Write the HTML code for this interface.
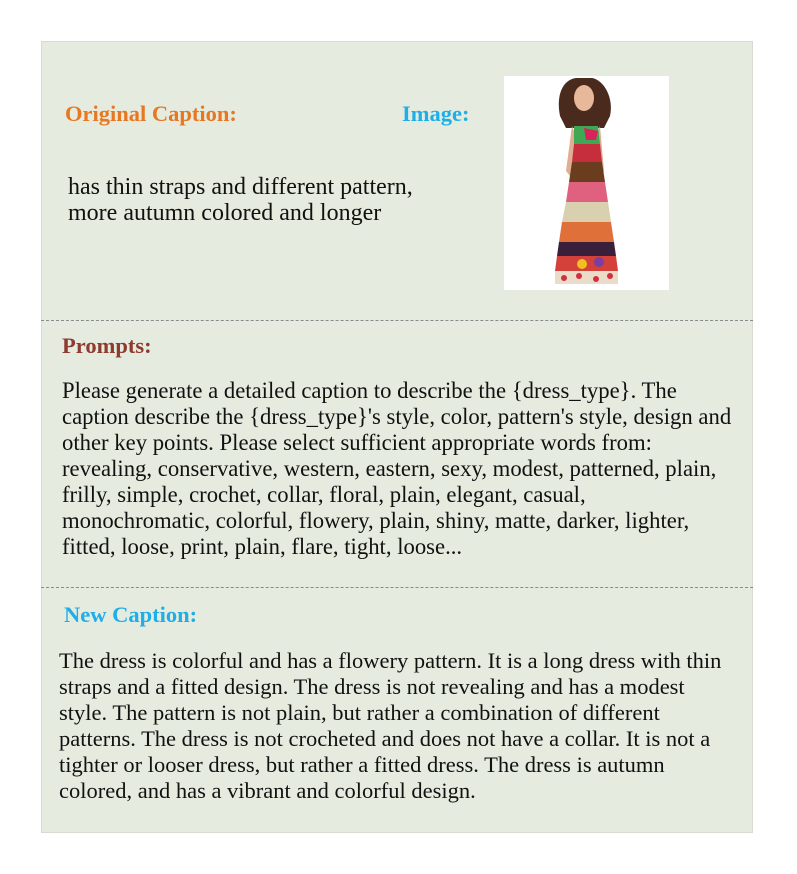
<!DOCTYPE html>
<html><head><style>
body{margin:0;width:797px;height:874px;background:#fff;font-family:"Liberation Serif",serif;position:relative;overflow:hidden}
.box{position:absolute;left:41px;top:41px;width:712px;height:792px;background:#e5ebde;border:1px solid #d6dccf;box-sizing:border-box}
.t{position:absolute;white-space:nowrap;font-size:22.7px;line-height:26px;color:#111}
.h{position:absolute;font-weight:bold;font-size:22.5px;white-space:nowrap}
.dash{position:absolute;left:41px;width:712px;border-top:1px dashed #8a8a8a}
</style></head><body>
<div class="box"></div>
<div class="h" style="left:65px;top:101px;color:#e87722">Original Caption:</div>
<div class="h" style="left:402px;top:101px;color:#1eaee8">Image:</div>
<div class="t" style="left:68px;top:174px;font-size:24px">has thin straps and different pattern,<br>more autumn colored and longer</div>
<svg style="position:absolute;left:504px;top:76px" width="165" height="214">
<rect width="165" height="214" fill="#fff"/>
<path d="M72 2 C58 4 52 20 56 40 L62 52 L100 52 L106 40 C110 22 100 4 88 2Z" fill="#4a2a1c"/>
<ellipse cx="80" cy="22" rx="10" ry="13" fill="#e8b89a"/>
<path d="M68 50 L62 95 L66 100 L72 60Z M96 50 L100 95 L96 100 L92 60Z" fill="#e2ad90"/>
<path d="M70 50 L94 50 L96 68 L70 68Z" fill="#3fa855"/>
<path d="M80 52 L94 55 L92 64 L82 64Z" fill="#d8235a"/>
<path d="M70 68 L96 68 L98 86 L68 86Z" fill="#c62e3e"/>
<path d="M68 86 L98 86 L101 106 L65 106Z" fill="#6a3d1e"/>
<path d="M65 106 L101 106 L104 126 L62 126Z" fill="#e06080"/>
<path d="M62 126 L104 126 L107 146 L58 146Z" fill="#d9d0b0"/>
<path d="M58 146 L107 146 L110 166 L55 166Z" fill="#e0703a"/>
<path d="M55 166 L110 166 L112 180 L53 180Z" fill="#3a1f3a"/>
<path d="M53 180 L112 180 L114 195 L51 195Z" fill="#d4403a"/>
<path d="M51 195 L114 195 L114 208 L51 208Z" fill="#eadcc8"/>
<g fill="#d32f3f"><circle cx="60" cy="202" r="3"/><circle cx="75" cy="200" r="3"/><circle cx="92" cy="203" r="3"/><circle cx="106" cy="200" r="3"/></g>
<circle cx="78" cy="188" r="5" fill="#f0c020"/><circle cx="95" cy="186" r="5" fill="#7a3fa0"/>
</svg>
<div class="dash" style="top:320px"></div>
<div class="h" style="left:62px;top:333px;color:#8e3a2e">Prompts:</div>
<div class="t" style="left:62px;top:378px">Please generate a detailed caption to describe the {dress_type}. The<br>caption describe the {dress_type}'s style, color, pattern's style, design and<br>other key points. Please select sufficient appropriate words from:<br>revealing, conservative, western, eastern, sexy, modest, patterned, plain,<br>frilly, simple, crochet, collar, floral, plain, elegant, casual,<br>monochromatic, colorful, flowery, plain, shiny, matte, darker, lighter,<br>fitted, loose, print, plain, flare, tight, loose...</div>
<div class="dash" style="top:587px"></div>
<div class="h" style="left:64px;top:602px;color:#1eaee8">New Caption:</div>
<div class="t" style="left:59px;top:648px;font-size:22.5px">The dress is colorful and has a flowery pattern. It is a long dress with thin<br>straps and a fitted design. The dress is not revealing and has a modest<br>style. The pattern is not plain, but rather a combination of different<br>patterns. The dress is not crocheted and does not have a collar. It is not a<br>tighter or looser dress, but rather a fitted dress. The dress is autumn<br>colored, and has a vibrant and colorful design.</div>
</body></html>
